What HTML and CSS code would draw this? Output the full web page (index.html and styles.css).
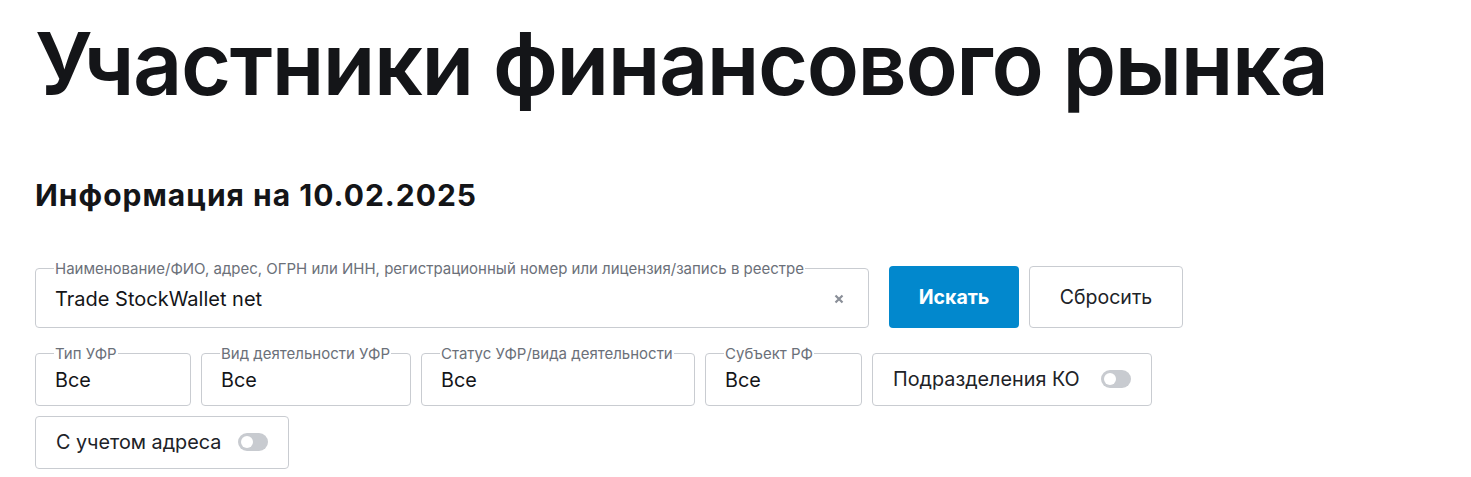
FILE: index.html
```html
<!DOCTYPE html>
<html lang="ru">
<head>
    <meta charset="UTF-8">
    <meta name="viewport" content="width=device-width, initial-scale=1.0">
    <title>Участники финансового рынка</title>
    <link rel="stylesheet" href="styles.css">
</head>
<body>
    <h1 class="page-title">Участники финансового рынка</h1>
    <h2 class="info-date">Информация на 10.02.2025</h2>

    <form class="search-form">
        <div class="search-row">
            <fieldset class="field field-search">
                <legend>Наименование/ФИО, адрес, ОГРН или ИНН, регистрационный номер или лицензия/запись в реестре</legend>
                <input class="field-input" type="text" value="Trade StockWallet net">
                <svg class="clear-btn" width="10" height="10" viewBox="0 0 10 10">
                    <path d="M1.5 1.5 L8.5 8.5 M8.5 1.5 L1.5 8.5" stroke="#8a8f98" stroke-width="2.2" stroke-linecap="butt"/>
                </svg>
            </fieldset>
            <button class="btn btn-primary" type="button">Искать</button>
            <button class="btn btn-outline" type="button">Сбросить</button>
        </div>

        <div class="filters">
            <fieldset class="field field-type">
                <legend>Тип УФР</legend>
                <div class="field-value">Все</div>
            </fieldset>
            <fieldset class="field field-activity">
                <legend>Вид деятельности УФР</legend>
                <div class="field-value">Все</div>
            </fieldset>
            <fieldset class="field field-status">
                <legend>Статус УФР/вида деятельности</legend>
                <div class="field-value">Все</div>
            </fieldset>
            <fieldset class="field field-region">
                <legend>Субъект РФ</legend>
                <div class="field-value">Все</div>
            </fieldset>
            <label class="toggle-box toggle-ko">
                <span>Подразделения КО</span>
                <span class="toggle"></span>
            </label>
            <label class="toggle-box toggle-address">
                <span>С учетом адреса</span>
                <span class="toggle"></span>
            </label>
        </div>
    </form>
</body>
</html>
```

FILE: styles.css
```css
body {
    font-family: 'Inter', 'Noto Sans', sans-serif;
    margin: 0;
    padding: 0 35px;
    background-color: #ffffff;
    color: #141518;
}

.page-title {
    font-size: 86px;
    font-weight: 600;
    line-height: 1.1;
    letter-spacing: -1.45px;
    margin: 17px 0 0;
}

.info-date {
    font-size: 30px;
    font-weight: 700;
    line-height: 36px;
    letter-spacing: 1px;
    margin: 65px 0 0;
}

.search-form {
    width: 1150px;
    margin-top: 48px;
}

.search-row {
    display: flex;
    align-items: flex-end;
    gap: 10px;
}

.field {
    margin: 0;
    padding: 0 19px;
    border: 1px solid #c9ccd1;
    border-radius: 4px;
    min-width: 0;
    box-sizing: border-box;
    display: flex;
    align-items: center;
}

.field legend {
    font-size: 15px;
    line-height: 16px;
    color: #6b7079;
    padding: 0 1px;
    margin-left: -1px;
    white-space: nowrap;
}

.field-search {
    width: 834px;
    height: 67px;
    padding-bottom: 6px;
    margin-right: 10px;
}

.field-input {
    flex: 1;
    min-width: 0;
    border: none;
    outline: none;
    padding: 0;
    font-family: inherit;
    font-size: 20px;
    color: #141518;
    background: transparent;
}

.clear-btn {
    margin-right: 5px;
    flex-shrink: 0;
}

.btn {
    height: 62px;
    border-radius: 4px;
    font-family: inherit;
    font-size: 19.5px;
    cursor: pointer;
    box-sizing: border-box;
}

.btn-primary {
    width: 130px;
    background-color: #0288cd;
    border: none;
    color: #ffffff;
    font-weight: 700;
}

.btn-outline {
    width: 154px;
    background-color: #ffffff;
    border: 1px solid #c9ccd1;
    color: #202227;
}

.filters {
    display: flex;
    flex-wrap: wrap;
    align-items: flex-end;
    gap: 10px;
    margin-top: 18px;
}

.filters .field {
    height: 60px;
    padding-bottom: 6px;
}

.field-value {
    font-size: 19.8px;
}

.field-type { width: 156px; }
.field-activity { width: 210px; }
.field-status { width: 274px; }
.field-region { width: 157px; }

.toggle-box {
    display: flex;
    align-items: center;
    justify-content: space-between;
    height: 53px;
    box-sizing: border-box;
    padding: 0 20px;
    border: 1px solid #c9ccd1;
    border-radius: 4px;
    font-size: 19.8px;
    color: #202227;
}

.toggle-ko { width: 280px; }
.toggle-address { width: 254px; }

.toggle {
    position: relative;
    width: 30px;
    height: 18px;
    border-radius: 9px;
    background-color: #c8cbd0;
}

.toggle::after {
    content: '';
    position: absolute;
    top: 3px;
    left: 3px;
    width: 12px;
    height: 12px;
    border-radius: 50%;
    background-color: #ffffff;
}
```
